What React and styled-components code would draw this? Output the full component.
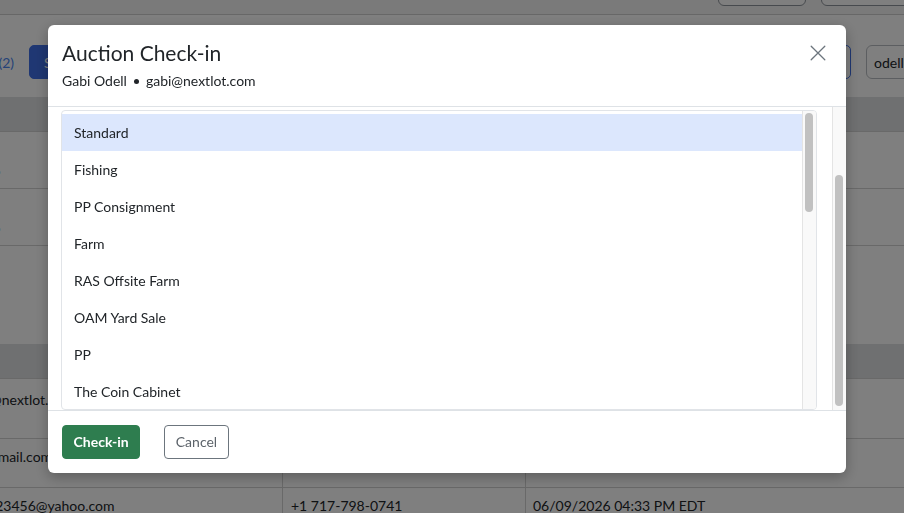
import React from "react";
import styled, { createGlobalStyle, css } from "styled-components";

const GlobalStyle = createGlobalStyle`
  *, *::before, *::after { box-sizing: border-box; }
  html, body { margin: 0; padding: 0; height: 100%; overflow: hidden; }
  body {
    font-family: Lato, "Noto Sans", "Liberation Sans", sans-serif;
    font-size: 14px;
    color: #212529;
    background: #fff;
  }
`;

/* ---------- page behind the dialog ---------- */

const Page = styled.div`
  height: 513px;
  overflow: hidden;
`;

const TopBar = styled.div`
  height: 15px;
  background: #f4f4f4;
  border-bottom: 1px solid #cfcfcf;
  display: flex;
  justify-content: flex-end;
  align-items: flex-end;
  gap: 15px;
  padding-bottom: 8px;
  overflow: hidden;
`;

const BarButton = styled.div`
  flex: none;
  width: ${(p) => p.$w}px;
  height: 34px;
  border: 1px solid #8f959c;
  border-radius: 6px;
  background: #fff;
  margin-right: ${(p) => p.$mr || 0}px;
`;

const Toolbar = styled.div`
  height: 82px;
  padding-top: 30px;
  display: flex;
  justify-content: space-between;
  align-items: flex-start;
`;

const ToolGroup = styled.div`
  display: flex;
  align-items: center;
  gap: 15px;
`;

const CountLink = styled.a`
  flex: none;
  width: 100px;
  margin-left: -86px;
  text-align: right;
  color: #4a86f0;
  white-space: nowrap;
`;

const ToolButton = styled.div`
  flex: none;
  height: 34px;
  padding: 0 14px;
  display: flex;
  align-items: center;
  border-radius: 5px;
  border: 1px solid #3f6fe6;
  background: ${(p) => (p.$outline ? "#fff" : "#3f6fe6")};
  color: ${(p) => (p.$outline ? "#3f6fe6" : "#fff")};
  width: ${(p) => (p.$w ? `${p.$w}px` : "auto")};
`;

const SearchBox = styled.div`
  flex: none;
  width: 160px;
  height: 34px;
  margin-right: -122px;
  padding-left: 7px;
  display: flex;
  align-items: center;
  border: 1px solid #b9bdc2;
  border-radius: 6px;
  background: #fff;
`;

const Table = styled.div`
  margin-left: ${(p) => -p.$offset}px;
  width: 1000px;
`;

const Row = styled.div`
  display: grid;
  grid-template-columns: ${(p) => 283 + p.$offset}px 243px 1fr;
  min-height: ${(p) => p.$h}px;
  border-bottom: 1px solid #d3d3d3;
  background: ${(p) => (p.$head ? "#dfe1e3" : "#fff")};
`;

const Spacer = styled.div`
  height: ${(p) => p.$h}px;
`;

const Cell = styled.div`
  padding: ${(p) => p.$pt ?? 10}px 8px 0 ${(p) => p.$pl ?? 8}px;
  line-height: 1.2;
  white-space: nowrap;
  border-right: 1px solid ${(p) => (p.$last ? "transparent" : "#d3d3d3")};
  font-weight: ${(p) => (p.$head ? 700 : 400)};
`;

/* ---------- dialog ---------- */

const Overlay = styled.div`
  position: fixed;
  inset: 0;
  background: rgba(0, 0, 0, 0.5);
  display: flex;
  align-items: flex-start;
  padding: 25px 0 0 48px;
`;

const Dialog = styled.div`
  width: 798px;
  background: #fff;
  border-radius: 6px;
  box-shadow: 0 4px 14px rgba(0, 0, 0, 0.28);
  display: flex;
  flex-direction: column;
  overflow: hidden;
`;

const Header = styled.div`
  height: 82px;
  display: flex;
  justify-content: space-between;
  align-items: flex-start;
  padding: 15px 20px 0 14px;
  border-bottom: 1px solid #dee2e6;
`;

const Title = styled.h2`
  margin: 0;
  font-size: 21px;
  font-weight: 400;
  line-height: 1.2;
  color: #212529;
`;

const Subtitle = styled.div`
  margin-top: 8px;
  display: flex;
  align-items: center;
  gap: 7px;
  font-size: 14px;
  line-height: 1.2;
`;

const Dot = styled.span`
  width: 5px;
  height: 5px;
  border-radius: 50%;
  background: #212529;
`;

const CloseButton = styled.button`
  margin-top: 5px;
  width: 16px;
  height: 16px;
  padding: 0;
  border: 0;
  background: none;
  color: #6c757d;
  display: flex;
`;

const Body = styled.div`
  display: flex;
  height: 303px;
`;

const BodyContent = styled.div`
  flex: 1;
  min-width: 0;
  padding: 3px 15px 0 13px;
`;

/* scrollbar rails with their thumbs */
const Track = styled.div`
  flex: none;
  width: 14px;
  background: #f9f9f9;
  border-left: 1px solid #e4e4e4;
  padding-left: 2px;
`;

const Thumb = styled.div`
  width: 8px;
  height: ${(p) => p.$size}px;
  margin-top: ${(p) => p.$offset}px;
  border-radius: 4px;
  background: #c1c1c1;
`;

const List = styled.div`
  display: flex;
  height: 300px;
  border: 1px solid #e1e4e8;
  border-radius: 4px;
  overflow: hidden;
`;

const Items = styled.ul`
  flex: 1;
  min-width: 0;
  list-style: none;
  margin: 0;
  padding: 3px 0 0;
  overflow: hidden;
`;

const Item = styled.li`
  height: 37px;
  line-height: 37px;
  padding: 0 12px;
  font-size: 14px;
  color: #212529;
  background: ${(p) => (p.$active ? "#dce7fd" : "transparent")};
`;

const Footer = styled.div`
  display: flex;
  gap: 24px;
  padding: 14px;
  border-top: 1px solid #dee2e6;
`;

const ActionButton = styled.button`
  height: 34px;
  border-radius: 4px;
  font-family: inherit;
  font-size: 14px;
  line-height: 1;
  ${(p) =>
    p.$primary
      ? css`
          padding: 0 10.5px;
          background: #2e7d4f;
          border: 1px solid #2e7d4f;
          color: #fff;
          font-weight: 700;
        `
      : css`
          padding: 0 10.5px;
          background: #fff;
          border: 1px solid #6c757d;
          color: #5c636a;
          font-weight: 400;
        `}
`;

const groups = [
  "Standard",
  "Fishing",
  "PP Consignment",
  "Farm",
  "RAS Offsite Farm",
  "OAM Yard Sale",
  "PP",
  "The Coin Cabinet",
  "Antiques",
  "Estate",
  "Firearms",
  "Tools & Equipment",
  "Vehicles",
  "Jewelry",
  "Coins",
  "Collectibles",
  "Furniture",
  "Sporting Goods",
  "Toys",
  "Art",
  "Real Estate",
  "Livestock",
  "Hay & Straw",
];

function CloseIcon() {
  return (
    <svg width="16" height="16" viewBox="0 0 16 16" fill="none">
      <path d="M1.2 1.2L14.8 14.8M14.8 1.2L1.2 14.8" stroke="currentColor" strokeWidth="1.3" strokeLinecap="round" />
    </svg>
  );
}

export default function App() {
  return (
    <>
      <GlobalStyle />
      <Page>
        <TopBar>
          <BarButton $w={88} />
          <BarButton $w={120} $mr={-37} />
        </TopBar>
        <Toolbar>
          <ToolGroup>
            <CountLink>Selected (2)</CountLink>
            <ToolButton>Search</ToolButton>
          </ToolGroup>
          <ToolGroup>
            <ToolButton $outline $w={110}>Export</ToolButton>
            <SearchBox>odell</SearchBox>
          </ToolGroup>
        </Toolbar>

        <Table $offset={45}>
          <Row $head $h={35} $offset={45}>
            <Cell $head></Cell>
            <Cell $head>Phone</Cell>
            <Cell $head $last>Registered</Cell>
          </Row>
          <Row $h={57} $offset={45}>
            <Cell $pt={14}>Gabi<br />Demo</Cell>
            <Cell>+1 717-555-0110</Cell>
            <Cell $last>06/08/2026 10:12 AM EDT</Cell>
          </Row>
          <Row $h={57} $offset={45}>
            <Cell $pt={14}>Test<br />Demo</Cell>
            <Cell>+1 717-555-0142</Cell>
            <Cell $last>06/08/2026 11:40 AM EDT</Cell>
          </Row>
        </Table>
        <Spacer $h={98} />
        <Table $offset={40}>
          <Row $head $h={35} $offset={40}>
            <Cell $head></Cell>
            <Cell $head>Phone</Cell>
            <Cell $head $last>Last Login</Cell>
          </Row>
          <Row $h={60} $offset={40}>
            <Cell $pt={13}>gab@nextlot.com</Cell>
            <Cell>+1 717-555-0187</Cell>
            <Cell $last $pl={7}>06/09/2026 09:05 AM EDT</Cell>
          </Row>
          <Row $h={49} $offset={40}>
            <Cell>jg@gmail.com</Cell>
            <Cell>+1 717-555-0163</Cell>
            <Cell $last $pl={7}>06/09/2026 01:18 PM EDT</Cell>
          </Row>
          <Row $h={49} $offset={40}>
            <Cell>bid123456@yahoo.com</Cell>
            <Cell>+1 717-798-0741</Cell>
            <Cell $last $pl={7}>06/09/2026 04:33 PM EDT</Cell>
          </Row>
        </Table>
      </Page>

      <Overlay>
        <Dialog role="dialog" aria-label="Auction Check-in">
          <Header>
            <div>
              <Title>Auction Check-in</Title>
              <Subtitle>
                <span>Gabi Odell</span>
                <Dot />
                <span>gabi@nextlot.com</span>
              </Subtitle>
            </div>
            <CloseButton aria-label="Close">
              <CloseIcon />
            </CloseButton>
          </Header>

          <Body>
            <BodyContent>
              <List>
                <Items>
                  {groups.map((g, i) => (
                    <Item key={g} $active={i === 0}>
                      {g}
                    </Item>
                  ))}
                </Items>
                <Track>
                  <Thumb $offset={2} $size={99} />
                </Track>
              </List>
            </BodyContent>
            <Track>
              <Thumb $offset={68} $size={231} />
            </Track>
          </Body>

          <Footer>
            <ActionButton $primary>Check-in</ActionButton>
            <ActionButton>Cancel</ActionButton>
          </Footer>
        </Dialog>
      </Overlay>
    </>
  );
}
